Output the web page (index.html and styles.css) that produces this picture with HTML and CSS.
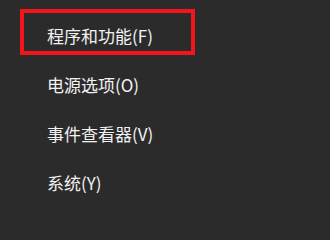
FILE: index.html
```html
<!DOCTYPE html>
<html lang="zh-CN">
<head>
<meta charset="utf-8">
<link rel="stylesheet" href="styles.css">
</head>
<body>
<div class="menu">
  <div class="item">程序和功能(F)</div>
  <div class="item">电源选项(O)</div>
  <div class="item">事件查看器(V)</div>
  <div class="item">系统(Y)</div>
  <div class="highlight"></div>
</div>
</body>
</html>
```
FILE: styles.css
```css
html, body {
  margin: 0;
  padding: 0;
  background: #2b2b2b;
  width: 330px;
  height: 220px;
  overflow: hidden;
}
.menu {
  position: relative;
  display: flex;
  flex-direction: column;
  padding-top: 11px;
  padding-left: 47px;
  font-family: "Noto Sans CJK SC", "Noto Sans", sans-serif;
  font-size: 17px;
  color: #f2f2f2;
}
.item {
  height: 49px;
  line-height: 49px;
  white-space: nowrap;
}
.highlight {
  position: absolute;
  left: 20px;
  top: 9px;
  width: 175px;
  height: 46px;
  box-sizing: border-box;
  border: 4px solid #f5141c;
}
```
